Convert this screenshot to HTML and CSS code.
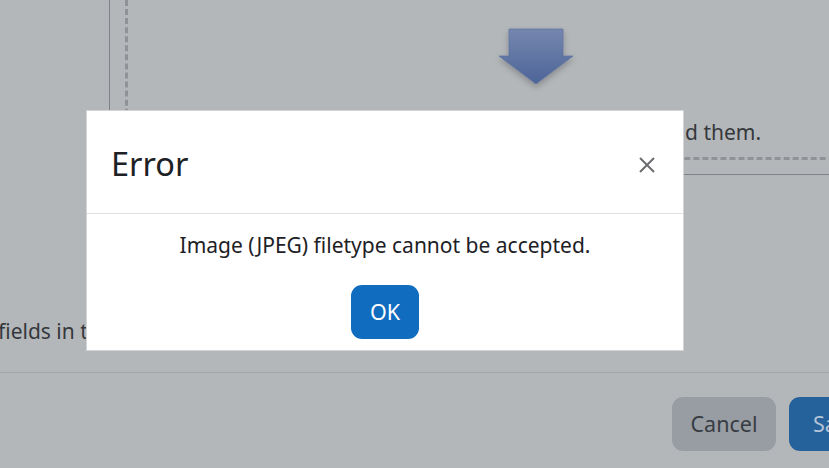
FILE: index.html
```html
<!DOCTYPE html>
<html lang="en">
<head>
<meta charset="utf-8">
<title>Error</title>
<link rel="stylesheet" href="styles.css">
</head>
<body>
<div class="page">
  <div class="filemanager">
    <div class="dropzone">
      <svg class="dnd-arrow" width="90" height="70" viewBox="0 0 90 70" aria-hidden="true">
        <defs>
          <linearGradient id="ag" x1="0" y1="0" x2="0" y2="1">
            <stop offset="0" stop-color="#7587ae"/>
            <stop offset="1" stop-color="#4d6498"/>
          </linearGradient>
          <filter id="sh" x="-30%" y="-30%" width="160%" height="170%">
            <feDropShadow dx="0" dy="3" stdDeviation="3" flood-color="#000" flood-opacity="0.25"/>
          </filter>
        </defs>
        <polygon points="18,3 72,3 72,30 82,30 45,58 8,30 18,30" fill="url(#ag)" stroke="#6075a2" stroke-width="0.8" filter="url(#sh)"/>
      </svg>
      <p class="dnd-text">You can drag and drop files here to add them.</p>
    </div>
  </div>
  <p class="required-note">fields in this form marked</p>
  <div class="actions">
    <button class="btn btn-cancel">Cancel</button>
    <button class="btn btn-save">Save changes</button>
  </div>
</div>

<div class="modal" role="dialog" aria-labelledby="mt">
  <div class="modal-header">
    <h5 class="modal-title" id="mt">Error</h5>
    <button class="close" aria-label="Close">
      <svg width="16" height="16" viewBox="0 0 16 16"><path d="M1 1 L15 15 M15 1 L1 15" stroke="#6a6c6f" stroke-width="2" fill="none"/></svg>
    </button>
  </div>
  <div class="modal-body">
    <p class="message">Image (JPEG) filetype cannot be accepted.</p>
    <button class="btn btn-ok">OK</button>
  </div>
</div>
</body>
</html>
```
FILE: styles.css
```css
html, body {
  margin: 0;
  padding: 0;
}
body {
  width: 829px;
  height: 468px;
  overflow: hidden;
  background: #b4b7ba;
  font-family: "Noto Sans", "Open Sans", sans-serif;
  font-size: 21px;
  color: #34383c;
  position: relative;
}
.page {
  width: 829px;
}
.filemanager {
  margin-left: 109px;
  width: 900px;
  height: 175px;
  border-left: 1px solid #7e8389;
  border-bottom: 1px solid #7e8389;
  box-sizing: border-box;
  padding-left: 15px;
}
.dropzone {
  width: 818px;
  height: 160px;
  box-sizing: border-box;
  border-left: 3px dashed #8f9398;
  border-bottom: 3px dashed #8f9398;
  display: flex;
  flex-direction: column;
  align-items: center;
  padding-top: 26px;
}
.dnd-arrow {
  display: block;
  flex: none;
}
.dnd-text {
  margin: 20px 0 0;
  line-height: 33px;
  white-space: nowrap;
}
.required-note {
  margin: 0 0 0 -2px;
  padding-top: 140px;
  height: 57px;
  line-height: 33px;
  white-space: nowrap;
}
.actions {
  border-top: 1px solid #a2a5a9;
  margin-top: 0;
  padding-left: 672px;
  padding-top: 24px;
  display: flex;
  gap: 13px;
}
.btn {
  font-family: inherit;
  font-size: 21.5px;
  border: none;
  border-radius: 11px;
  height: 54px;
  padding: 0 24px;
  line-height: 54px;
  flex: none;
}
.btn-cancel {
  background: #989da4;
  color: #373c42;
  width: 104px;
  padding: 0;
}
.btn-save {
  background: #25619a;
  color: #b4c4d6;
}
.modal {
  position: absolute;
  left: 86px;
  top: 110px;
  width: 598px;
  height: 241px;
  box-sizing: border-box;
  background: #fff;
  border: 1px solid #d2d4d6;
}
.modal-header {
  height: 103px;
  box-sizing: border-box;
  border-bottom: 1px solid #dee2e6;
  display: flex;
  align-items: center;
  justify-content: space-between;
  padding: 0 28px 0 24px;
}
.modal-title {
  margin: 2px 0 0;
  font-size: 32.5px;
  font-weight: 400;
  color: #1d2125;
  line-height: 1.2;
}
.close {
  background: none;
  border: none;
  padding: 0;
  margin-top: 6px;
  width: 16px;
  height: 16px;
  display: flex;
}
.modal-body {
  display: flex;
  flex-direction: column;
  align-items: center;
  padding-top: 15px;
}
.message {
  margin: 0;
  color: #1d2125;
  line-height: 33px;
}
.btn-ok {
  margin-top: 23px;
  width: 68px;
  padding: 0;
  background: #0f6cbf;
  color: #fff;
}
```
